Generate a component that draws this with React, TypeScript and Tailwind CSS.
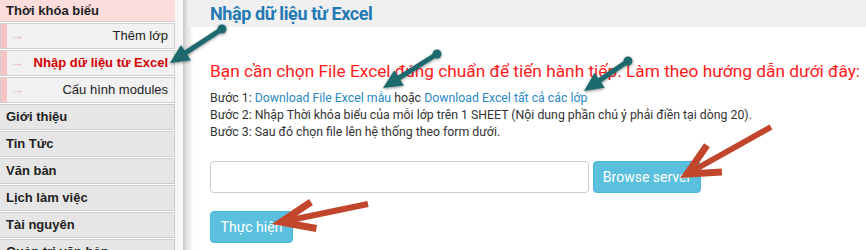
import React from "react";

type P = [number, number];

function TealArrow({ tail, tip }: { tail: P; tip: P }) {
  const dx = tip[0] - tail[0];
  const dy = tip[1] - tail[1];
  const len = Math.hypot(dx, dy);
  const ux = dx / len;
  const uy = dy / len;
  const nx = -uy;
  const ny = ux;
  const hl = 19;
  const hw = 9;
  const bx = tip[0] - hl * ux;
  const by = tip[1] - hl * uy;
  const pts = `${tip[0]},${tip[1]} ${bx + hw * nx},${by + hw * ny} ${bx - hw * nx},${by - hw * ny}`;
  return (
    <g filter="url(#shd)">
      <line x1={tail[0]} y1={tail[1]} x2={bx + ux * 2} y2={by + uy * 2} stroke="#1d6a6e" strokeWidth={5} strokeLinecap="round" />
      <circle cx={tail[0]} cy={tail[1]} r={4.5} fill="#1d6a6e" />
      <polygon points={pts} fill="#1d6a6e" />
    </g>
  );
}

function RedArrow({ tail, tip, ang, wl }: { tail: P; tip: P; ang: number; wl: number }) {
  const dx = tail[0] - tip[0];
  const dy = tail[1] - tip[1];
  const base = Math.atan2(dy, dx);
  const a1 = base + (ang * Math.PI) / 180;
  const a2 = base - (ang * Math.PI) / 180;
  const w1: P = [tip[0] + wl * Math.cos(a1), tip[1] + wl * Math.sin(a1)];
  const w2: P = [tip[0] + wl * Math.cos(a2), tip[1] + wl * Math.sin(a2)];
  return (
    <g>
      <line x1={tail[0]} y1={tail[1]} x2={tip[0]} y2={tip[1]} stroke="#c1462c" strokeWidth={6} />
      <polyline points={`${w1[0]},${w1[1]} ${tip[0]},${tip[1]} ${w2[0]},${w2[1]}`} fill="none" stroke="#c1462c" strokeWidth={7} strokeLinejoin="miter" />
    </g>
  );
}

function SubItem({ label, active }: { label: string; active?: boolean }) {
  return (
    <div className="shrink-0 flex h-[26px] mb-[1px] border border-[#cfcfcf] bg-[#f1f1f1]">
      <div className="w-[6px] bg-[#f6c4c4]" />
      <div className="w-[20px] flex items-center justify-center text-[#f3b0b0] text-[13px]">→</div>
      <div
        className={
          "flex-1 flex items-center justify-end pr-[6px] text-[13px] " +
          (active ? "font-bold text-[#d40000]" : "text-[#222]")
        }
      >
        {label}
      </div>
    </div>
  );
}

function MainItem({ label }: { label: string }) {
  return (
    <div className="shrink-0 h-[26px] mb-[1px] flex items-center pl-[6px] border-y border-r border-[#cbcbcb] bg-[#e6e6e6] text-[13px] font-bold text-[#222]">
      {label}
    </div>
  );
}

export default function App() {
  return (
    <div
      className="relative w-[866px] h-[250px] overflow-hidden flex bg-white"
      style={{ fontFamily: "'Liberation Sans', Arial, sans-serif" }}
    >
      {/* Sidebar */}
      <div className="w-[175px] shrink-0 flex flex-col">
        <div className="shrink-0 h-[22px] mb-[1px] flex items-center pl-[6px] bg-[#fddcdc] border-b border-[#cfcfcf] text-[13px] font-bold text-[#222]">
          Thời khóa biểu
        </div>
        <SubItem label="Thêm lớp" />
        <SubItem label="Nhập dữ liệu từ Excel" active />
        <SubItem label="Cấu hình modules" />
        <MainItem label="Giới thiệu" />
        <MainItem label="Tin Tức" />
        <MainItem label="Văn bản" />
        <MainItem label="Lịch làm việc" />
        <MainItem label="Tài nguyên" />
        <MainItem label="Quản trị văn bản" />
      </div>

      {/* Divider strip */}
      <div className="w-[8px] shrink-0 bg-[#f6f6f6]" />
      <div className="w-[5px] shrink-0 bg-gradient-to-r from-[#c9c9c9] to-[#ececec]" />

      {/* Main */}
      <div className="flex-1 flex flex-col bg-[#f0f0f0]" style={{ fontFamily: "Roboto, 'Liberation Sans', sans-serif" }}>
        <div className="h-[27px] shrink-0 flex items-center pl-[22px] text-[18px] font-bold text-[#2479b5] tracking-[-0.4px]">
          Nhập dữ liệu từ Excel
        </div>
        <div className="flex-1 flex">
          <div className="w-[5px] bg-gradient-to-r from-[#e6e6e6] to-white" />
          <div className="flex-1 bg-white pl-[17px] pt-[32px]">
            <div className="text-[17.3px] leading-[24px] text-[#ff1a1a] whitespace-nowrap">
              Bạn cần chọn File Excel đúng chuẩn để tiến hành tiếp. Làm theo hướng dẫn dưới đây:
            </div>
            <div className="mt-[7px] text-[12.3px] leading-[17px] text-[#333]">
              <div>
                Bước 1: <span className="text-[#2a89c4]">Download File Excel mẫu</span> hoặc{" "}
                <span className="text-[#2a89c4]">Download Excel tất cả các lớp</span>
              </div>
              <div>Bước 2: Nhập Thời khóa biểu của mỗi lớp trên 1 SHEET (Nội dung phần chú ý phải điền tại dòng 20).</div>
              <div>Bước 3: Sau đó chọn file lên hệ thống theo form dưới.</div>
            </div>
            <div className="mt-[20px] flex gap-[4px]">
              <div className="w-[379px] h-[32px] border border-[#cccccc] rounded-[4px] bg-white" />
              <div className="w-[108px] h-[32px] rounded-[4px] bg-[#5bc0de] border border-[#46b8da] flex items-center justify-center text-white text-[14px]">
                Browse server
              </div>
            </div>
            <div className="mt-[18px] w-[83px] h-[32px] rounded-[4px] bg-[#5bc0de] border border-[#46b8da] flex items-center justify-center text-white text-[14px]">
              Thực hiện
            </div>
          </div>
        </div>
      </div>

      {/* Annotation arrows */}
      <svg className="absolute left-0 top-0 pointer-events-none" width={866} height={250} viewBox="0 0 866 250">
        <defs>
          <filter id="shd" x="-50%" y="-50%" width="200%" height="200%">
            <feDropShadow dx="0" dy="1" stdDeviation="1.5" floodColor="#000" floodOpacity="0.45" />
          </filter>
        </defs>
        <TealArrow tail={[222, 29]} tip={[170, 63]} />
        <TealArrow tail={[437, 54]} tip={[383, 88]} />
        <TealArrow tail={[628, 61]} tip={[584, 91]} />
        <RedArrow tail={[771, 127]} tip={[687, 174]} ang={26} wl={35} />
        <RedArrow tail={[368, 204]} tip={[281, 222]} ang={22} wl={36} />
      </svg>
    </div>
  );
}
